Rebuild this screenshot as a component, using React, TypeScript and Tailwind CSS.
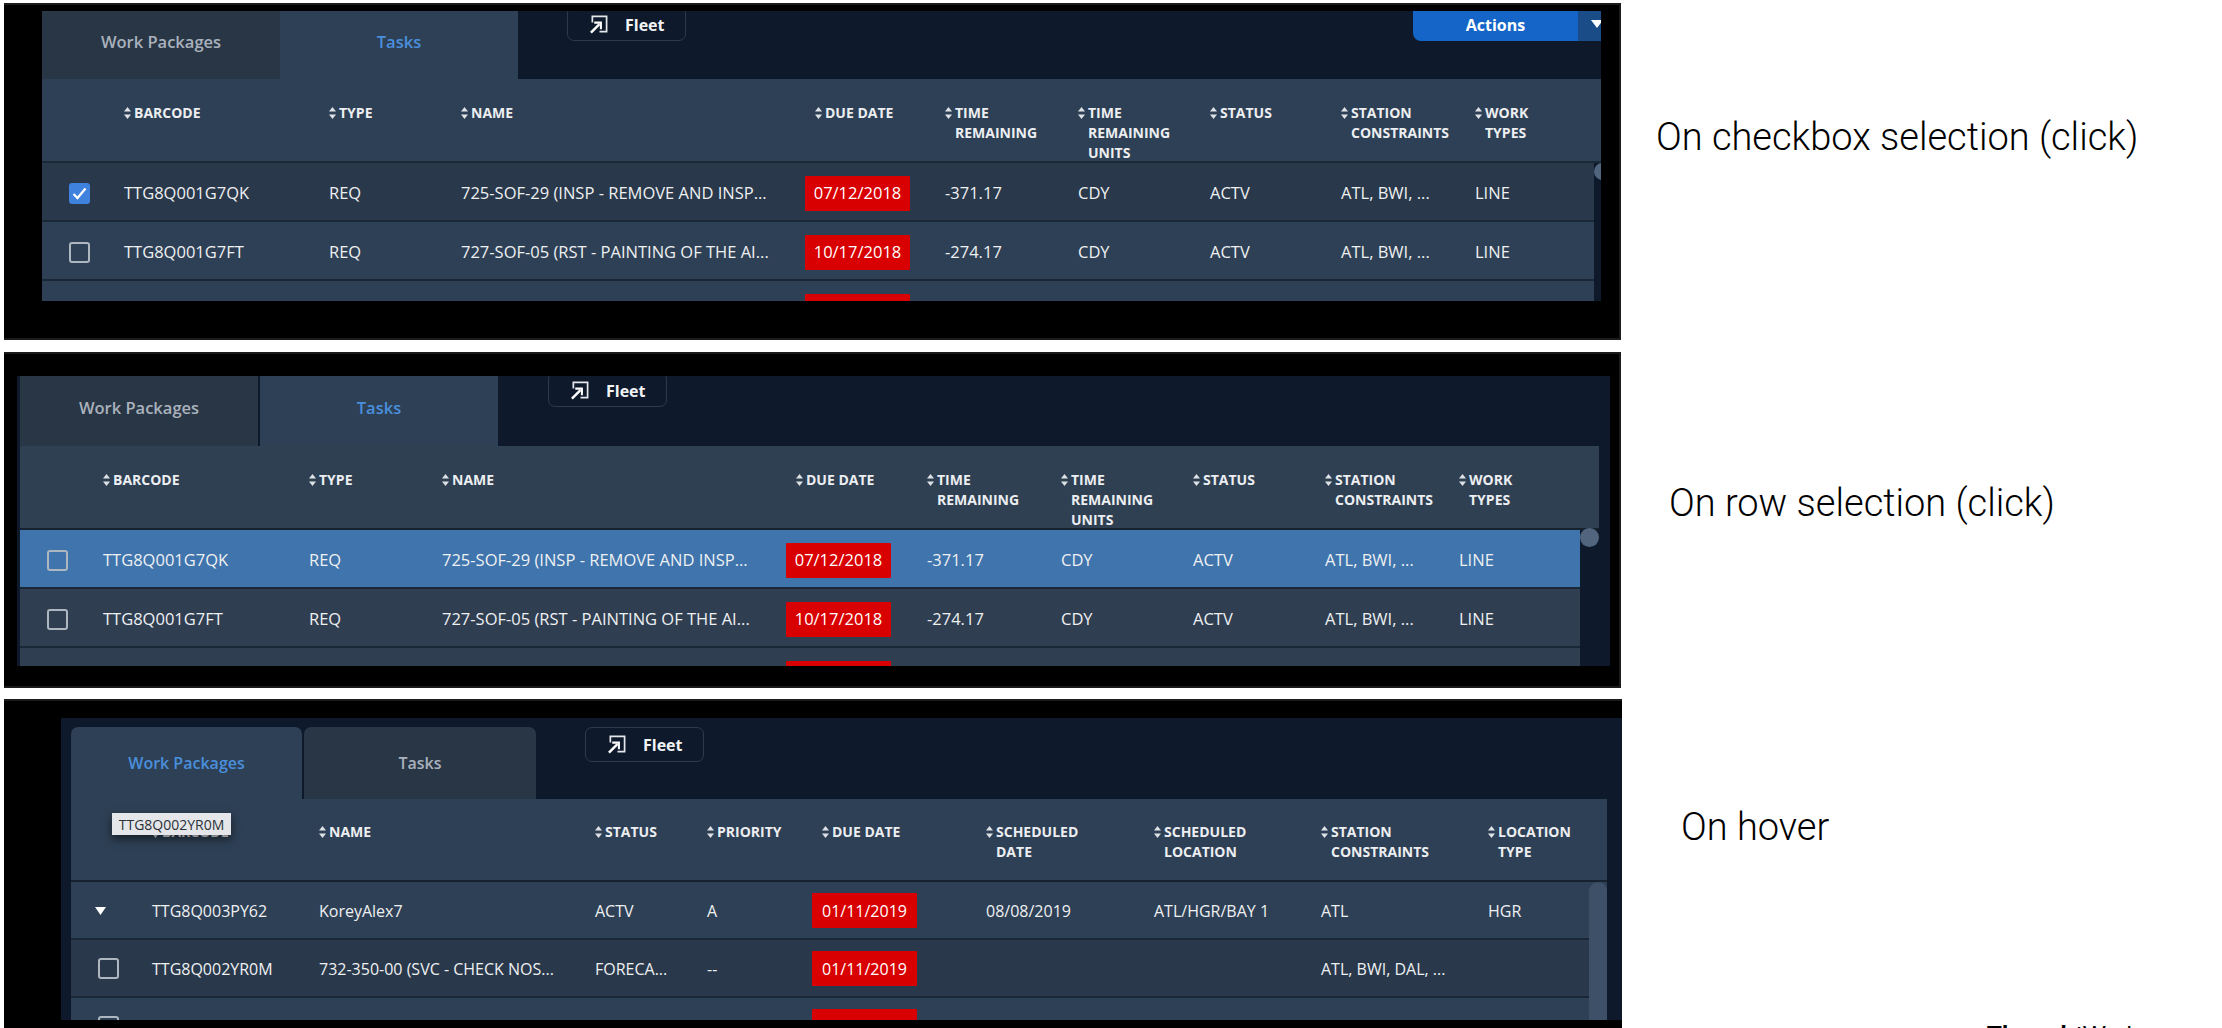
import React from "react";

type Row = { lead: "check" | "box" | "caret" | "none"; cells: string[]; bg: string };

function SortIcon() {
  return (
    <svg width="7" height="12" viewBox="0 0 7 12" className="mt-[4px] mr-[3px] shrink-0 text-[#dfe3e7]" fill="currentColor">
      <path d="M3.5 0L7 4.6H0Z" />
      <path d="M0 7.4H7L3.5 12Z" />
    </svg>
  );
}

function FleetButton({ className }: { className: string }) {
  return (
    <div className={"flex h-[35px] w-[119px] shrink-0 items-center rounded-[7px] border border-[#2c3a4e] pl-[21px] text-[16px] font-bold text-[#f1f3f5] " + className}>
      <svg width="20" height="19" viewBox="0 0 21 20" fill="none" className="mr-[16px] shrink-0">
        <path d="M3.5 8V1.5H18.5V17.5H11" stroke="#e5e8eb" strokeWidth="1.8" />
        <path d="M2 18.5L11 9.5" stroke="#ffffff" strokeWidth="2.6" />
        <path d="M5.5 8H12.5V15" stroke="#ffffff" strokeWidth="2.2" />
      </svg>
      Fleet
    </div>
  );
}

function Tab({ label, active, className }: { label: string; active: boolean; className: string }) {
  return (
    <div
      className={
        "flex shrink-0 items-center justify-center font-semibold " +
        (active ? "bg-[#2e4055] text-[#4a8fdc] " : "bg-[#293646] text-[#a9b2bc] ") +
        className
      }
    >
      {label}
    </div>
  );
}

function HeaderRow({ grid, cols, className }: { grid: string; cols: (string[] | null)[]; className: string }) {
  return (
    <div className={"grid bg-[#2e4055] text-[14px] font-bold leading-[20px] text-[#eceef1] " + grid + " " + className}>
      {cols.map((lines, i) =>
        lines ? (
          <div key={i} className="flex items-start whitespace-nowrap">
            <SortIcon />
            <span>
              {lines.map((l) => (
                <span key={l} className="block">
                  {l}
                </span>
              ))}
            </span>
          </div>
        ) : (
          <div key={i} />
        )
      )}
    </div>
  );
}

function Checkbox({ checked }: { checked: boolean }) {
  if (checked) {
    return (
      <div className="flex h-[21px] w-[21px] items-center justify-center rounded-[3px] bg-[#3f82dd]">
        <svg width="15" height="13" viewBox="0 0 15 13" fill="none">
          <path d="M1.5 7L5.5 11L13.5 1.5" stroke="#ffffff" strokeWidth="2.2" />
        </svg>
      </div>
    );
  }
  return <div className="h-[21px] w-[21px] rounded-[3px] border-2 border-[#aeb6bf]" />;
}

function DataRow({ row, grid, due, size }: { row: Row; grid: string; due: number; size: string }) {
  return (
    <div className={"grid shrink-0 items-center border-b-2 border-[#1a2736] text-[#eef0f2] " + size + " " + grid + " " + row.bg}>
      <div className={row.lead === "caret" ? "pl-[24px]" : "pl-[27px]"}>
        {row.lead === "check" && <Checkbox checked />}
        {row.lead === "box" && <Checkbox checked={false} />}
        {row.lead === "caret" && (
          <svg width="11" height="8" viewBox="0 0 11 8" fill="#ffffff">
            <path d="M0 0H11L5.5 8Z" />
          </svg>
        )}
      </div>
      {row.cells.map((c, i) =>
        i === due ? (
          <div key={i} className="-ml-[10px] flex h-[35px] w-[105px] items-center justify-center rounded-[1px] bg-[#d80000] text-white">
            {c}
          </div>
        ) : (
          <div key={i} className="whitespace-nowrap">
            {c}
          </div>
        )
      )}
    </div>
  );
}

const taskHeaders = [
  null,
  ["BARCODE"],
  ["TYPE"],
  ["NAME"],
  ["DUE DATE"],
  ["TIME", "REMAINING"],
  ["TIME", "REMAINING", "UNITS"],
  ["STATUS"],
  ["STATION", "CONSTRAINTS"],
  ["WORK", "TYPES"],
];

const row1 = ["TTG8Q001G7QK", "REQ", "725-SOF-29 (INSP - REMOVE AND INSP...", "07/12/2018", "-371.17", "CDY", "ACTV", "ATL, BWI, ...", "LINE"];
const row2 = ["TTG8Q001G7FT", "REQ", "727-SOF-05 (RST - PAINTING OF THE AI...", "10/17/2018", "-274.17", "CDY", "ACTV", "ATL, BWI, ...", "LINE"];
const blankTask = ["", "", "", "", "", "", "", "", ""];

const grid1 = "grid-cols-[82px_205px_132px_354px_130px_133px_132px_131px_134px_1fr]";
const grid2 = "grid-cols-[83px_206px_133px_354px_131px_134px_132px_132px_134px_1fr]";
const grid3 = "grid-cols-[81px_167px_276px_112px_115px_164px_168px_167px_167px_1fr]";
const taskSize = "h-[59px] pt-[4px] text-[16.5px]";
const wpSize = "h-[58px] pt-[1px] text-[16px]";

function CheckboxPanel() {
  return (
    <div className="ml-[4px] h-[337px] w-[1617px] shrink-0 border-y-2 border-r-2 border-[#1b1b1b] bg-black pl-[38px] pt-[6px]">
      <div className="flex h-[290px] w-[1559px] flex-col overflow-hidden bg-[#0e1a2b]">
        <div className="flex h-[68px] shrink-0 items-start">
          <Tab label="Work Packages" active={false} className="h-[68px] w-[238px] pb-[6px] text-[16.5px]" />
          <Tab label="Tasks" active className="h-[68px] w-[238px] pb-[6px] text-[16.5px]" />
          <FleetButton className="-mt-[5px] ml-[49px] pt-[2px]" />
          <div className="-mt-[5px] ml-auto flex h-[35px] text-[16px] font-bold text-white">
            <div className="flex w-[165px] items-center justify-center rounded-bl-[8px] bg-[#1565c8] pt-[2px]">Actions</div>
            <div className="w-[23px] bg-[#1a4d87] pl-[13px] pt-[14px]">
              <svg width="10" height="8" viewBox="0 0 10 8" fill="#ffffff" className="block">
                <path d="M0 0H12L6 8Z" />
              </svg>
            </div>
          </div>
        </div>
        <HeaderRow grid={grid1} cols={taskHeaders} className="h-[84px] shrink-0 border-b-2 border-[#1a2837] pt-[24px]" />
        <div className="flex min-h-0 flex-1">
          <div className="flex w-[1552px] flex-col">
            <DataRow row={{ lead: "check", cells: row1, bg: "bg-[#29384a]" }} grid={grid1} due={3} size={taskSize} />
            <DataRow row={{ lead: "box", cells: row2, bg: "bg-[#2e4055]" }} grid={grid1} due={3} size={taskSize} />
            <DataRow row={{ lead: "none", cells: blankTask, bg: "bg-[#2e4055]" }} grid={grid1} due={3} size={taskSize} />
          </div>
          <div className="w-[7px] overflow-hidden">
            <div className="h-[17px] w-[17px] rounded-full bg-[#51657f]" />
          </div>
        </div>
      </div>
    </div>
  );
}

function RowPanel() {
  return (
    <div className="ml-[4px] mt-[12px] h-[336px] w-[1617px] shrink-0 border-y-2 border-r-2 border-[#1b1b1b] bg-black pl-[13px] pt-[22px]">
      <div className="flex h-[290px] w-[1593px] flex-col overflow-hidden bg-[#0e1a2b] pl-[3px]">
        <div className="flex h-[70px] shrink-0 items-start">
          <Tab label="Work Packages" active={false} className="h-[70px] w-[238px] pb-[6px] text-[16.5px]" />
          <Tab label="Tasks" active className="ml-[2px] h-[70px] w-[238px] pb-[6px] text-[16.5px]" />
          <FleetButton className="-mt-[4px] ml-[50px] pt-[2px]" />
        </div>
        <HeaderRow grid={grid2} cols={taskHeaders} className="h-[84px] w-[1579px] shrink-0 border-b-2 border-[#16222f] bg-[#2f4053] pt-[24px]" />
        <div className="flex min-h-0 flex-1">
          <div className="flex w-[1560px] flex-col">
            <DataRow row={{ lead: "box", cells: row1, bg: "bg-[#3f74ad]" }} grid={grid2} due={3} size={taskSize} />
            <DataRow row={{ lead: "box", cells: row2, bg: "bg-[#2f3e51]" }} grid={grid2} due={3} size={taskSize} />
            <DataRow row={{ lead: "none", cells: blankTask, bg: "bg-[#2f3e51]" }} grid={grid2} due={3} size={taskSize} />
          </div>
          <div className="-mt-[2px] h-[19px] w-[19px] rounded-full bg-[#51657f]" />
        </div>
      </div>
    </div>
  );
}

function HoverPanel() {
  return (
    <div className="ml-[4px] mt-[11px] h-[329px] w-[1618px] shrink-0 border-t-2 border-[#1b1b1b] bg-black pl-[57px] pt-[17px]">
      <div className="flex h-[302px] w-[1561px] flex-col overflow-hidden bg-[#0e1a2b] pl-[10px] pt-[9px]">
        <div className="flex h-[72px] shrink-0 items-start">
          <Tab label="Work Packages" active className="h-[72px] w-[231px] rounded-t-[7px] text-[16px]" />
          <Tab label="Tasks" active={false} className="ml-[2px] h-[72px] w-[232px] rounded-t-[7px] text-[16px]" />
          <FleetButton className="ml-[49px]" />
        </div>
        <div className="relative w-[1536px] shrink-0">
          <HeaderRow
            grid={grid3}
            cols={[null, ["BARCODE"], ["NAME"], ["STATUS"], ["PRIORITY"], ["DUE DATE"], ["SCHEDULED", "DATE"], ["SCHEDULED", "LOCATION"], ["STATION", "CONSTRAINTS"], ["LOCATION", "TYPE"]]}
            className="h-[83px] border-b-2 border-[#16222f] pt-[23px]"
          />
          <div className="absolute left-[41px] top-[14px] flex h-[22px] w-[119px] items-center justify-center bg-[#e4e6ea] text-[14px] text-[#2b3138] shadow-[0_4px_10px_rgba(0,0,0,0.55)]">
            TTG8Q002YR0M
          </div>
        </div>
        <div className="flex min-h-0 w-[1536px] flex-1">
          <div className="flex w-[1518px] flex-col">
            <DataRow
              row={{ lead: "caret", cells: ["TTG8Q003PY62", "KoreyAlex7", "ACTV", "A", "01/11/2019", "08/08/2019", "ATL/HGR/BAY 1", "ATL", "HGR"], bg: "bg-[#2e4055]" }}
              grid={grid3}
              due={4}
              size={wpSize}
            />
            <DataRow
              row={{ lead: "box", cells: ["TTG8Q002YR0M", "732-350-00 (SVC - CHECK NOS...", "FORECA...", "--", "01/11/2019", "", "", "ATL, BWI, DAL, ...", ""], bg: "bg-[#29384a]" }}
              grid={grid3}
              due={4}
              size={wpSize}
            />
            <DataRow row={{ lead: "box", cells: blankTask, bg: "bg-[#2e4055]" }} grid={grid3} due={4} size={wpSize} />
          </div>
          <div className="w-[18px] bg-[#2e4055]">
            <div className="h-full rounded-t-full bg-[#3d5067]" />
          </div>
        </div>
      </div>
    </div>
  );
}

function Label({ text, className }: { text: string; className: string }) {
  return <div className={"whitespace-nowrap font-['Roboto',sans-serif] text-[38px] font-light leading-[48px] text-black " + className}>{text}</div>;
}

export default function App() {
  return (
    <div className="flex h-[1028px] w-[2222px] flex-col overflow-hidden bg-white pt-[3px] font-['Open_Sans',sans-serif]">
      <div className="flex items-start">
        <CheckboxPanel />
        <Label text="On checkbox selection (click)" className="ml-[35px] mt-[110px]" />
      </div>
      <div className="flex items-start">
        <RowPanel />
        <Label text="On row selection (click)" className="ml-[48px] mt-[139px]" />
      </div>
      <div className="flex items-start">
        <HoverPanel />
        <div className="flex flex-col">
          <Label text="On hover" className="ml-[59px] mt-[115px]" />
          <div className="ml-[365px] mt-[170px] whitespace-nowrap font-['Liberation_Sans',sans-serif] text-[24px] leading-[28px] text-black">
            <span className="font-bold">Thought</span>Works
          </div>
        </div>
      </div>
    </div>
  );
}
